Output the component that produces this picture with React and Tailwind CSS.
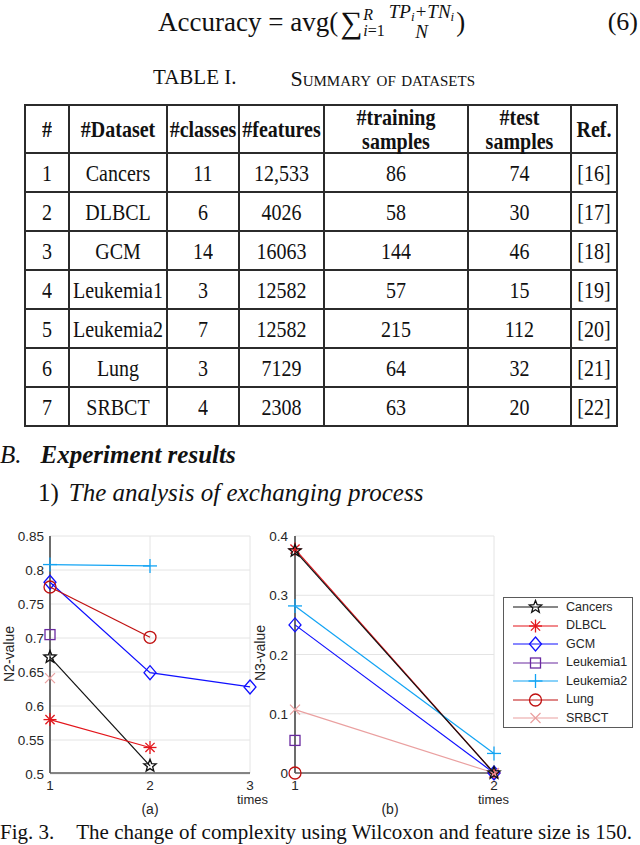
import React from "react";

const serif = { fontFamily: '"Liberation Serif", "Times New Roman", serif' };
const sans = '"Liberation Sans", Arial, sans-serif';

const rows = [
  ["1", "Cancers", "11", "12,533", "86", "74", "[16]"],
  ["2", "DLBCL", "6", "4026", "58", "30", "[17]"],
  ["3", "GCM", "14", "16063", "144", "46", "[18]"],
  ["4", "Leukemia1", "3", "12582", "57", "15", "[19]"],
  ["5", "Leukemia2", "7", "12582", "215", "112", "[20]"],
  ["6", "Lung", "3", "7129", "64", "32", "[21]"],
  ["7", "SRBCT", "4", "2308", "63", "20", "[22]"],
];

const colWidths = [44, 98, 72, 85, 144, 103, 46];

const series = {
  Cancers: { color: "#111111", marker: "star" },
  DLBCL: { color: "#e3151b", marker: "asterisk" },
  GCM: { color: "#1010ff", marker: "diamond" },
  Leukemia1: { color: "#6a2aa0", marker: "square" },
  Leukemia2: { color: "#12a4f4", marker: "plus" },
  Lung: { color: "#c01010", marker: "circle" },
  SRBCT: { color: "#eaa0a0", marker: "x" },
};

const dataA = {
  Cancers: [[1, 0.672], [2, 0.512]],
  DLBCL: [[1, 0.58], [2, 0.539]],
  GCM: [[1, 0.782], [2, 0.649], [3, 0.628]],
  Leukemia1: [[1, 0.705]],
  Leukemia2: [[1, 0.808], [2, 0.806]],
  Lung: [[1, 0.775], [2, 0.701]],
  SRBCT: [[1, 0.641]],
};

const dataB = {
  DLBCL: [[1, 0.378], [2, 0]],
  GCM: [[1, 0.25], [2, 0]],
  Leukemia1: [[1, 0.055]],
  Leukemia2: [[1, 0.282], [2, 0.033]],
  Lung: [[1, 0]],
  SRBCT: [[1, 0.107], [2, 0]],
  Cancers: [[1, 0.375], [2, 0]],
};

function starPoints(cx, cy, R = 6.5, r = 2.8) {
  const pts = [];
  for (let i = 0; i < 10; i++) {
    const rad = i % 2 === 0 ? R : r;
    const a = -Math.PI / 2 + (i * Math.PI) / 5;
    pts.push(`${(cx + rad * Math.cos(a)).toFixed(2)},${(cy + rad * Math.sin(a)).toFixed(2)}`);
  }
  return pts.join(" ");
}

function Marker({ type, x, y, color }) {
  const s = { stroke: color, strokeWidth: 1.3, fill: "none" };
  if (type === "star") return <polygon points={starPoints(x, y)} {...s} />;
  if (type === "diamond")
    return <polygon points={`${x},${y - 7} ${x + 6},${y} ${x},${y + 7} ${x - 6},${y}`} {...s} />;
  if (type === "square") return <rect x={x - 5} y={y - 5} width={10} height={10} {...s} />;
  if (type === "circle") return <circle cx={x} cy={y} r={6} {...s} />;
  if (type === "plus")
    return (
      <g {...s}>
        <line x1={x - 7} y1={y} x2={x + 7} y2={y} />
        <line x1={x} y1={y - 7} x2={x} y2={y + 7} />
      </g>
    );
  if (type === "x")
    return (
      <g {...s}>
        <line x1={x - 5} y1={y - 5} x2={x + 5} y2={y + 5} />
        <line x1={x - 5} y1={y + 5} x2={x + 5} y2={y - 5} />
      </g>
    );
  // asterisk
  return (
    <g {...s}>
      <line x1={x - 6.5} y1={y} x2={x + 6.5} y2={y} />
      <line x1={x} y1={y - 6.5} x2={x} y2={y + 6.5} />
      <line x1={x - 4.6} y1={y - 4.6} x2={x + 4.6} y2={y + 4.6} />
      <line x1={x - 4.6} y1={y + 4.6} x2={x + 4.6} y2={y - 4.6} />
    </g>
  );
}

function Series({ data, sx, sy }) {
  return Object.entries(data).map(([name, pts]) => {
    const { color, marker } = series[name];
    const xy = pts.map(([a, b]) => [sx(a), sy(b)]);
    return (
      <g key={name}>
        {xy.length > 1 && (
          <polyline points={xy.map((p) => p.join(",")).join(" ")} fill="none" stroke={color} strokeWidth={1.2} />
        )}
        {xy.map(([x, y], i) => (
          <Marker key={i} type={marker} x={x} y={y} color={color} />
        ))}
      </g>
    );
  });
}

function ChartA() {
  const sx = (v) => 50 + (v - 1) * 100;
  const sy = (v) => 15 + (0.85 - v) * 680;
  const ticks = [0.85, 0.8, 0.75, 0.7, 0.65, 0.6, 0.55, 0.5];
  return (
    <svg width="260" height="295" overflow="visible" className="shrink-0" style={{ fontFamily: sans }}>
      {ticks.map((t) => (
        <line key={t} x1={50} x2={250} y1={sy(t)} y2={sy(t)} stroke="#e4e4e4" strokeWidth={1} />
      ))}
      <line x1={150} x2={150} y1={15} y2={252} stroke="#e4e4e4" />
      <line x1={250} x2={250} y1={15} y2={252} stroke="#e4e4e4" />
      <line x1={50} x2={250} y1={252} y2={252} stroke="#5c5c5c" strokeWidth={1.6} />
      <line x1={50} x2={50} y1={15} y2={252} stroke="#5c5c5c" strokeWidth={1.8} />
      {ticks.map((t) => (
        <text key={t} x={44} y={sy(t) + 5} fontSize="13.5" fill="#262626" textAnchor="end">
          {String(t)}
        </text>
      ))}
      {[1, 2, 3].map((t) => (
        <text key={t} x={sx(t)} y={269} fontSize="13.5" fill="#262626" textAnchor="middle">
          {t}
        </text>
      ))}
      <text x={268} y={283} fontSize="13" fill="#262626" textAnchor="end">times</text>
      <text x={150} y={293} fontSize="14" fill="#262626" textAnchor="middle">(a)</text>
      <text x={14} y={133} fontSize="14" fill="#262626" textAnchor="middle" transform="rotate(-90 14 133)">
        N2-value
      </text>
      <Series data={dataA} sx={sx} sy={sy} />
    </svg>
  );
}

function ChartB() {
  const sx = (v) => 35 + (v - 1) * 199;
  const sy = (v) => 252 - v * 592.5;
  const ticks = [0.4, 0.3, 0.2, 0.1, 0];
  return (
    <svg width="240" height="295" overflow="visible" className="shrink-0" style={{ fontFamily: sans }}>
      {ticks.map((t) => (
        <line key={t} x1={35} x2={234} y1={sy(t)} y2={sy(t)} stroke="#e4e4e4" />
      ))}
      <line x1={234} x2={234} y1={15} y2={252} stroke="#e4e4e4" />
      <line x1={35} x2={234} y1={252} y2={252} stroke="#5c5c5c" strokeWidth={1.6} />
      <line x1={35} x2={35} y1={15} y2={252} stroke="#5c5c5c" strokeWidth={1.8} />
      {ticks.map((t) => (
        <text key={t} x={28} y={sy(t) + 5} fontSize="13.5" fill="#262626" textAnchor="end">
          {t}
        </text>
      ))}
      {[1, 2].map((t) => (
        <text key={t} x={sx(t)} y={269} fontSize="13.5" fill="#262626" textAnchor="middle">
          {t}
        </text>
      ))}
      <text x={249} y={283} fontSize="13" fill="#262626" textAnchor="end">times</text>
      <text x={130} y={293} fontSize="14" fill="#262626" textAnchor="middle">(b)</text>
      <text x={5} y={132} fontSize="14" fill="#262626" textAnchor="middle" transform="rotate(-90 5 132)">
        N3-value
      </text>
      <Series data={dataB} sx={sx} sy={sy} />
    </svg>
  );
}

function Legend() {
  return (
    <div className="mt-[76px] ml-[3px] w-[130px] h-[131px] border border-[#5a5a5a] bg-white flex flex-col justify-center gap-[1px] pl-[9px]">
      {Object.entries(series).map(([name, { color, marker }]) => (
        <div key={name} className="flex items-center h-[17.5px]">
          <svg width="46" height="16" className="shrink-0">
            <line x1={0} x2={45} y1={8} y2={8} stroke={color} strokeWidth={1.2} />
            <Marker type={marker} x={22.5} y={8} color={color} />
          </svg>
          <span className="ml-[7px] text-[12.5px] text-[#262626]" style={{ fontFamily: sans }}>
            {name}
          </span>
        </div>
      ))}
    </div>
  );
}

export default function App() {
  return (
    <div className="w-[640px] h-[845px] bg-white text-[#111] overflow-hidden" style={serif}>
      {/* Equation */}
      <div className="h-[44px] flex items-center relative">
        <div className="ml-[158px] flex items-center text-[27px] leading-none">
          <span>Accuracy = avg(</span>
          <span className="text-[31px] ml-[2px]">∑</span>
          <span className="inline-flex flex-col text-[16px] leading-[16px] ml-[1px] mt-[2px]">
            <span className="italic">R</span>
            <span><i>i</i>=1</span>
          </span>
          <span className="inline-flex flex-col items-center text-[19px] leading-[20px] ml-[4px] mr-[2px] italic">
            <span>TP<sub className="text-[13px]">i</sub>+TN<sub className="text-[13px]">i</sub></span>
            <span>N</span>
          </span>
          <span>)</span>
        </div>
        <span className="ml-auto mr-[2px] text-[26px] leading-none">(6)</span>
      </div>

      {/* Table title */}
      <div className="h-[60px] pt-[8px] flex items-center">
        <span className="ml-[153px] text-[21px]">TABLE I.</span>
        <span className="ml-[54px] text-[22px] [font-variant-caps:small-caps]">Summary of datasets</span>
      </div>

      {/* Table */}
      <table className="ml-[24px] border-collapse table-fixed text-[20px] leading-[22px]">
        <colgroup>
          {colWidths.map((w, i) => (
            <col key={i} style={{ width: w }} />
          ))}
        </colgroup>
        <thead>
          <tr className="h-[48px] font-bold">
            {["#", "#Dataset", "#classes", "#features", "#training samples", "#test samples", "Ref."].map((h) => (
              <th key={h} className="border-2 border-[#2b2b2b] text-center p-0 font-bold">
                <span className="inline-block scale-y-[1.12]">
                  {h === "#training samples" ? (
                    <>#training<br />samples</>
                  ) : h === "#test samples" ? (
                    <>#test<br />samples</>
                  ) : (
                    h
                  )}
                </span>
              </th>
            ))}
          </tr>
        </thead>
        <tbody>
          {rows.map((r) => (
            <tr key={r[0]} className="h-[39px]">
              {r.map((c, i) => (
                <td key={i} className="border-2 border-[#2b2b2b] text-center p-0 whitespace-nowrap">
                  <span className="inline-block scale-y-[1.12]">{c}</span>
                </td>
              ))}
            </tr>
          ))}
        </tbody>
      </table>

      {/* Section headings */}
      <div className="h-[50px] mt-[3px] flex items-center text-[25px]">
        <span className="italic">B.</span>
        <span className="ml-[19px] italic font-bold">Experiment results</span>
      </div>
      <div className="h-[26px] flex items-center text-[25px] pl-[38px]">
        <span>1)</span>
        <span className="ml-[10px] italic">The analysis of exchanging process</span>
      </div>

      {/* Figure */}
      <div className="mt-[15px] h-[295px] flex">
        <ChartA />
        <ChartB />
        <Legend />
      </div>

      {/* Caption */}
      <div className="h-[33px] flex items-center text-[21px] whitespace-nowrap">
        <span>Fig. 3.</span>
        <span className="ml-[22px]">The change of complexity using Wilcoxon and feature size is 150.</span>
      </div>
    </div>
  );
}
